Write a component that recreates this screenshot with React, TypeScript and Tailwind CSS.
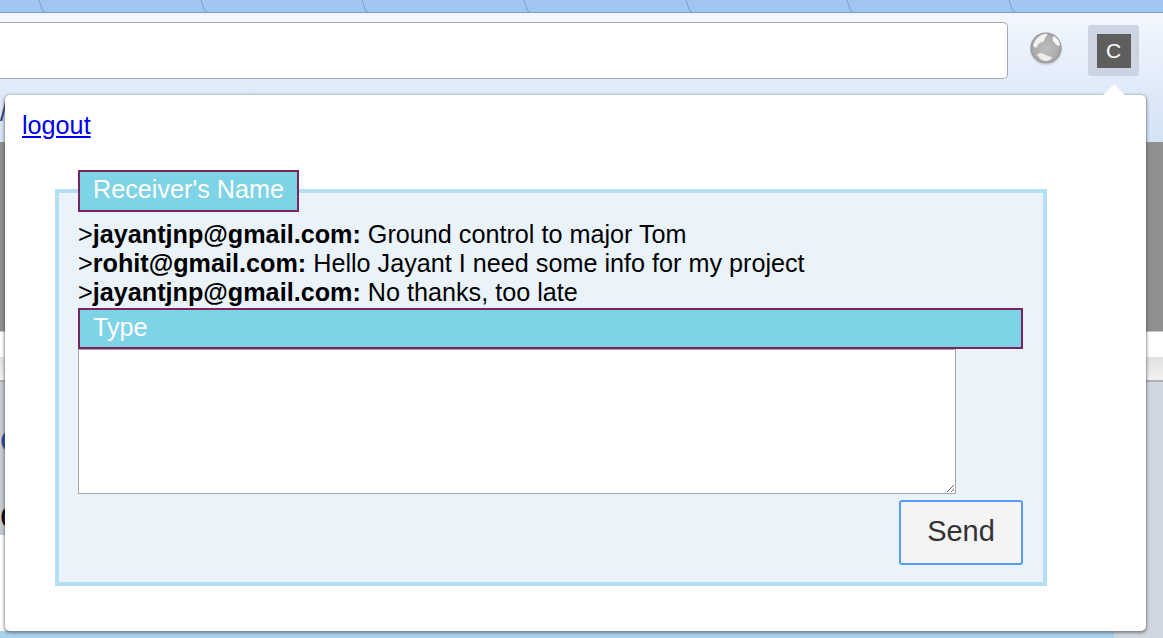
const tabs = [0, 1, 2, 3, 4, 5, 6, 7]

const messages = [
  { from: 'jayantjnp@gmail.com', text: 'Ground control to major Tom' },
  { from: 'rohit@gmail.com', text: 'Hello Jayant I need some info for my project' },
  { from: 'jayantjnp@gmail.com', text: 'No thanks, too late' },
]

function Globe() {
  return (
    <svg width="36" height="36" viewBox="0 0 36 36">
      <defs>
        <radialGradient id="globe" cx="0.5" cy="0.5" r="0.52">
          <stop offset="0" stopColor="#bdbdbd" />
          <stop offset="0.8" stopColor="#acacac" />
          <stop offset="1" stopColor="#8e8e8e" />
        </radialGradient>
      </defs>
      <circle cx="18" cy="19" r="16.5" fill="#aeb4bc" opacity="0.35" />
      <circle cx="18" cy="18" r="15.5" fill="url(#globe)" />
      <path d="M5.5 15c1-5 5-10 12-11.500 2 0 2.500 1.500 1 2.500-2 1.500-1 3.500-3 5.500-2 1.500-3.500 .5-5 2.500-1 2-2 4-3.500 3.500-1-.5-1.500-1.500-1.500-2.500z" fill="#f0f0f0" />
      <path d="M26 6c3 2 5.500 5 6 8.500 0 1-1 1.500-2.500 1-2-1-2.500-2.500-4-4-1.500-1.500-1-4.500 .5-5.500z" fill="#f6f6f6" />
      <path d="M9 24.500c3-2 6-1.500 9 .5 2 1.500 5 1 6 2.500 0 1-3 3.500-6 3.500-3.500 0-6-2-7-4-1-1-2.500-1.500-2-2.500z" fill="#ececec" />
    </svg>
  )
}

export default function App() {
  return (
    <div className="relative flex h-[638px] w-[1163px] flex-col overflow-hidden bg-white font-['Liberation_Sans',Arial,sans-serif]">
      {/* tab strip */}
      <div className="flex h-[13px] shrink-0 border-b border-[#7c9ecb] bg-[#a1c6f1] pl-[38px]">
        {tabs.map(t => (
          <div key={t} className="h-full w-[161.7px] shrink-0">
            <svg width="8" height="13" viewBox="0 0 8 13" className="block">
              <path d="M1 0 L4 9 Q5 12 7 12" fill="none" stroke="#7c9ecb" strokeWidth="1" />
            </svg>
          </div>
        ))}
      </div>

      {/* toolbar */}
      <div className="h-[129px] shrink-0 bg-gradient-to-b from-[#f3f7fe] to-[#d3e2f5]">
        <div className="flex items-start">
          <div className="mt-[9px] h-[57px] w-[1008px] rounded-r-[5px] border border-l-0 border-[#a3a9b5] bg-white"></div>
          <div className="ml-[20px] mt-[17px]">
            <Globe />
          </div>
          <div className="ml-[24px] mt-[12px] flex h-[51px] w-[51px] items-center justify-center rounded-[3px] bg-[#cbd4e0]">
            <div className="flex h-[34px] w-[34px] items-center justify-center bg-[#5e5e5e] text-[21px] text-white">C</div>
          </div>
        </div>
        <div className="mt-[19px] text-[25px] leading-[29px] text-[#1a3f7a]">/</div>
      </div>

      {/* page behind the popup */}
      <div className="h-[189px] shrink-0 bg-[#909090]"></div>
      <div className="h-[26px] shrink-0 border-t border-[#c4c4c4] bg-white"></div>
      <div className="h-[25px] shrink-0 border-b-2 border-[#b0b0b0] bg-gradient-to-b from-[#e2e2e2] to-[#f2f2f2]"></div>
      <div className="flex min-h-0 flex-1">
        <div className="flex w-[1114px] flex-col">
          <div className="h-[153px] bg-[#c6cad1] pt-[37px] text-[36px] font-bold leading-[40px] text-[#1f4e9c]">
            <div>c</div>
            <div className="mt-[36px] font-normal text-black">c</div>
          </div>
          <div className="h-[96px] bg-white"></div>
          <div className="flex-1 bg-[#a9d3ec]"></div>
        </div>
        <div className="flex-1 bg-[#d1d7e0]"></div>
      </div>

      {/* extension popup */}
      <div className="absolute left-[5px] top-[95px] h-[536px] w-[1141px] rounded-[5px] bg-white pl-[17px] pt-[16px] shadow-[0_1px_3px_1px_rgba(60,60,70,0.55)]">
        <div className="absolute -top-[11px] left-[1097px] h-0 w-0 border-x-[12px] border-b-[12px] border-x-transparent border-b-white"></div>
        <a href="#" className="text-[25.2px] leading-[29px] text-[#0000ee] underline">logout</a>
        <fieldset className="ml-[33px] mt-[29px] h-[416px] w-[992px] border-4 border-[#b5dff4] bg-[#eaf3fa] pl-[19px] pr-[20px] pt-[8px] text-[25.2px] leading-[29px] text-black">
          <legend className="h-[42px] w-[221px] border-2 border-[#7d2360] bg-[#7fd3e6] pl-[13px] text-[25.2px] leading-[34px] text-white">Receiver's Name</legend>
          {messages.map((m, i) => (
            <div key={i}>
              &gt;<b>{m.from}:</b> {m.text}
            </div>
          ))}
          <div className="mt-[1px] h-[41px] border-2 border-[#7d2360] bg-[#7fd3e6] pl-[13px] leading-[34px] text-white">Type</div>
          <textarea className="block h-[145px] w-[878px] border border-[#aaaaaa] bg-white"></textarea>
          <div className="mt-[6px] flex justify-end">
            <button className="h-[65px] w-[124px] rounded-[3px] border-2 border-[#5b9bff] bg-[#f4f4f4] pb-[2px] text-[29px] text-[#333333]">Send</button>
          </div>
        </fieldset>
      </div>
    </div>
  )
}
